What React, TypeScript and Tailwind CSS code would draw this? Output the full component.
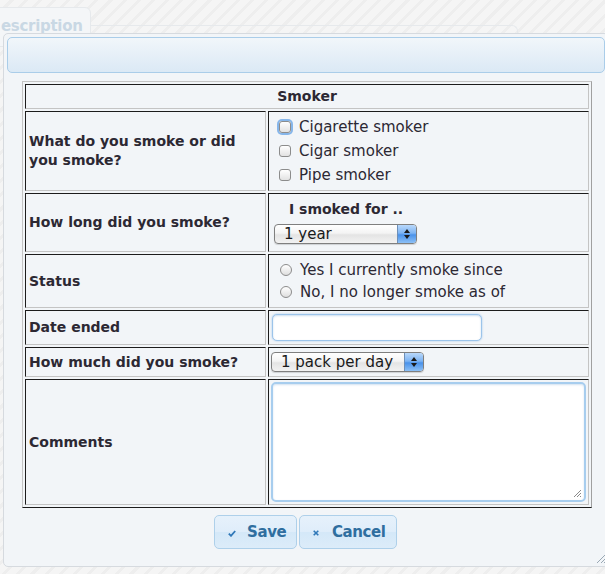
import React from "react";

const cell =
  "border border-t-[#1c1c1c] border-l-[#1c1c1c] border-r-[#c4c4c4] border-b-[#c4c4c4] p-0 align-middle";

function Checkbox({ focus = false }: { focus?: boolean }) {
  return (
    <span
      className={
        "inline-block h-[12px] w-[12px] shrink-0 rounded-[3px] border border-[#8c8c8c] bg-[linear-gradient(#ffffff,#e2e2e2)] " +
        (focus ? "shadow-[0_0_0_2px_rgba(98,160,230,0.75)]" : "")
      }
    />
  );
}

function Radio() {
  return (
    <span className="inline-block h-[12px] w-[12px] shrink-0 rounded-full border border-[#8c8c8c] bg-[linear-gradient(#ffffff,#dedede)]" />
  );
}

function Aqua({ value, w }: { value: string; w: string }) {
  return (
    <div
      className={
        "relative flex h-[20px] items-center overflow-hidden rounded-[4px] border border-[#7f7f7f] bg-[linear-gradient(#ffffff_0%,#f4f4f4_45%,#e4e4e4_55%,#f2f2f2_100%)] pl-[9px] text-[15px] text-[#1a1a1a] shadow-[0_1px_1px_rgba(0,0,0,0.15)] " +
        w
      }
    >
      <span className="leading-[18px]">{value}</span>
      <div className="absolute right-0 top-0 flex h-full w-[19px] flex-col items-center justify-center gap-[2px] border-l border-[#6d8fb8] bg-[linear-gradient(#b9d8fb_0%,#7db4f3_45%,#4a92ea_55%,#8cc0f6_100%)]">
        <svg width="6" height="4" viewBox="0 0 6 4">
          <path d="M0 4 L3 0 L6 4 Z" fill="#1a1a1a" />
        </svg>
        <svg width="6" height="4" viewBox="0 0 6 4">
          <path d="M0 0 L3 4 L6 0 Z" fill="#1a1a1a" />
        </svg>
      </div>
    </div>
  );
}

export default function App() {
  return (
    <div className="relative h-[574px] w-[605px] overflow-hidden bg-[repeating-linear-gradient(135deg,#f5f5f5_0px,#f5f5f5_7px,#eeeeee_7px,#eeeeee_10px)] font-['DejaVu_Sans',sans-serif] text-[#2c2833]">
      {/* faded background page */}
      <div className="absolute left-[-20px] top-[7px] h-[40px] w-[111px] rounded-tr-[6px] border border-[#e6e9ec] bg-[#f4f6f8]">
        <div className="pl-[20px] pt-[9px] text-[15px] font-bold leading-[18px] tracking-[-0.3px] text-[#c9d8e4]">
          escription
        </div>
      </div>
      <div className="absolute left-[91px] top-[25px] h-[40px] w-[427px] rounded-tr-[6px] border-r border-t border-[#e6e9ec]" />

      {/* dialog */}
      <div className="absolute left-[3px] top-[33px] h-[534px] w-[606px] rounded-[5px] border border-[#d6dadf] bg-[#f2f5f8] p-[3px]">
        <div className="h-[36px] rounded-[5px] border border-[#aacde9] bg-[linear-gradient(#f1f6fa,#dbe9f5)]" />

        <div className="ml-[15px] mt-[8px] flex w-[570px] flex-col items-center">
          <table className="w-[570px] border-separate border-spacing-[2px] border border-t-[#c4c4c4] border-l-[#c4c4c4] border-b-[#1c1c1c] border-r-[#a0a0a0] text-[14px] leading-[19px]">
            <tbody>
              <tr>
                <td colSpan={2} className={cell + " h-[25px] text-center font-bold"}>
                  Smoker
                </td>
              </tr>
              <tr>
                <td className={cell + " h-[80px] w-[241px] pl-[3px] font-bold"}>
                  What do you smoke or did
                  <br />
                  you smoke?
                </td>
                <td className={cell + " pl-[10px] text-[15px]"}>
                  <div className="flex flex-col">
                    <label className="flex h-[24px] items-center gap-[8px]">
                      <Checkbox focus />
                      <span>Cigarette smoker</span>
                    </label>
                    <label className="flex h-[24px] items-center gap-[8px]">
                      <Checkbox />
                      <span>Cigar smoker</span>
                    </label>
                    <label className="flex h-[24px] items-center gap-[8px]">
                      <Checkbox />
                      <span>Pipe smoker</span>
                    </label>
                  </div>
                </td>
              </tr>
              <tr>
                <td className={cell + " h-[59px] pl-[3px] font-bold"}>How long did you smoke?</td>
                <td className={cell + " pl-[5px]"}>
                  <div className="flex flex-col gap-[6px]">
                    <div className="pl-[15px] font-bold leading-[17px]">I smoked for ..</div>
                    <Aqua value="1 year" w="w-[143px]" />
                  </div>
                </td>
              </tr>
              <tr>
                <td className={cell + " h-[54px] pl-[3px] font-bold"}>Status</td>
                <td className={cell + " pl-[11px] text-[15px]"}>
                  <div className="flex flex-col">
                    <label className="flex h-[22px] items-center gap-[8px]">
                      <Radio />
                      <span>Yes I currently smoke since</span>
                    </label>
                    <label className="flex h-[22px] items-center gap-[8px]">
                      <Radio />
                      <span>No, I no longer smoke as of</span>
                    </label>
                  </div>
                </td>
              </tr>
              <tr>
                <td className={cell + " h-[35px] pl-[3px] font-bold"}>Date ended</td>
                <td className={cell + " pl-[3px]"}>
                  <div className="h-[27px] w-[210px] rounded-[5px] border border-[#9cc4ea] bg-white shadow-[inset_0_1px_2px_rgba(80,140,200,0.3),0_0_2px_rgba(120,175,230,0.7)]" />
                </td>
              </tr>
              <tr>
                <td className={cell + " h-[30px] pl-[3px] font-bold"}>How much did you smoke?</td>
                <td className={cell + " pl-[2px]"}>
                  <Aqua value="1 pack per day" w="w-[153px]" />
                </td>
              </tr>
              <tr>
                <td className={cell + " h-[126px] pl-[3px] font-bold"}>Comments</td>
                <td className={cell + " pl-[2px]"}>
                  <div className="relative h-[120px] w-[315px] rounded-[5px] border-2 border-[#a7cdee] bg-white shadow-[inset_0_1px_2px_rgba(80,140,200,0.25)]">
                    <svg className="absolute bottom-[2px] right-[2px]" width="10" height="10" viewBox="0 0 10 10">
                      <path d="M9 2 L2 9 M9 5 L5 9 M9 8 L8 9" stroke="#8a8a8a" strokeWidth="1" />
                    </svg>
                  </div>
                </td>
              </tr>
            </tbody>
          </table>

          <div className="mr-[3px] mt-[7px] flex gap-[2px]">
            <button className="flex h-[34px] w-[83px] items-center rounded-[5px] border border-[#aed0ea] bg-[linear-gradient(#e6f1fb_0%,#dfedfa_50%,#d4e8f8_51%,#dcecf9_100%)] pl-[13px] text-[15px] font-bold tracking-[-0.4px] text-[#2f6e9f]">
              <svg width="8" height="7" viewBox="0 0 8 7" className="mr-[11px] mt-[2px]">
                <path d="M0.8 3.6 L3 5.8 L7.2 1" stroke="#2f78b8" strokeWidth="1.8" fill="none" />
              </svg>
              Save
            </button>
            <button className="flex h-[34px] w-[98px] items-center rounded-[5px] border border-[#aed0ea] bg-[linear-gradient(#e6f1fb_0%,#dfedfa_50%,#d4e8f8_51%,#dcecf9_100%)] pl-[13px] text-[15px] font-bold tracking-[-0.4px] text-[#2f6e9f]">
              <svg width="6" height="6" viewBox="0 0 6 6" className="mr-[13px] mt-[1px]">
                <path d="M0.7 0.7 L5.3 5.3 M5.3 0.7 L0.7 5.3" stroke="#2f78b8" strokeWidth="1.6" />
              </svg>
              Cancel
            </button>
          </div>
        </div>

        <svg className="absolute bottom-[3px] right-[2px]" width="10" height="12" viewBox="0 0 10 12">
          <path d="M10 3 L1 12 M10 7 L5 12 M10 10 L8 12" stroke="#9aa8b4" strokeWidth="1" />
        </svg>
      </div>
    </div>
  );
}
